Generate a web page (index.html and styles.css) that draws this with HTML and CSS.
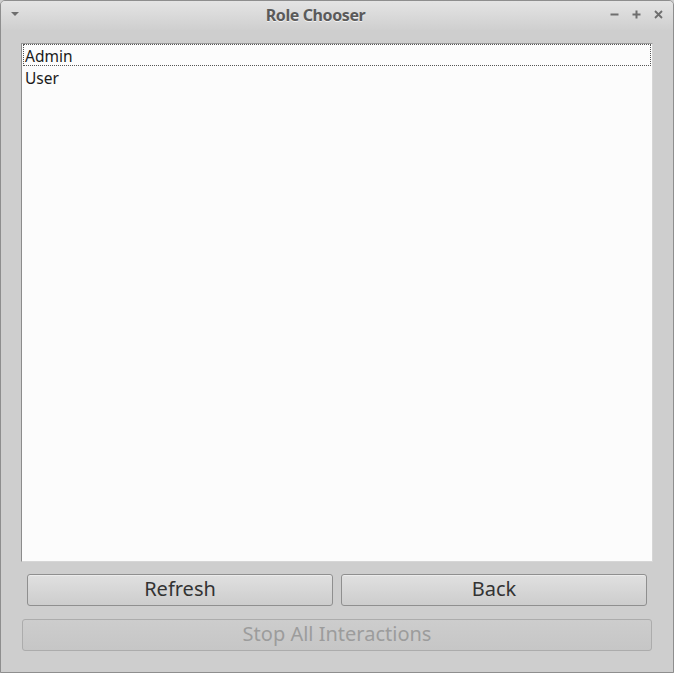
FILE: index.html
```html
<!DOCTYPE html>
<html>
<head>
<meta charset="utf-8">
<link rel="stylesheet" href="styles.css">
</head>
<body>
<div class="window">
  <div class="titlebar">
    <svg class="menu-arrow" width="8" height="5" viewBox="0 0 8 5"><path d="M0 0 L8 0 L4 4 Z" fill="#6e6e6e"/></svg>
    <div class="title">Role Chooser</div>
    <div class="controls">
      <svg width="9" height="9" viewBox="0 0 9 9"><path d="M0.5 4.5 H8.5" stroke="#6e6e6e" stroke-width="2"/></svg>
      <svg width="9" height="9" viewBox="0 0 9 9"><path d="M0.5 4.5 H8.5 M4.5 0.5 V8.5" stroke="#6e6e6e" stroke-width="2"/></svg>
      <svg width="9" height="9" viewBox="0 0 9 9"><path d="M1 1 L8 8 M8 1 L1 8" stroke="#6e6e6e" stroke-width="1.8"/></svg>
    </div>
  </div>
  <div class="content">
    <div class="list">
      <div class="item focused">Admin</div>
      <div class="item">User</div>
    </div>
    <div class="button-row">
      <button class="btn">Refresh</button>
      <button class="btn">Back</button>
    </div>
    <button class="btn btn-wide" disabled>Stop All Interactions</button>
  </div>
</div>
</body>
</html>
```

FILE: styles.css
```css
html, body {
  margin: 0;
  padding: 0;
  background: #cecece;
}
body {
  font-family: "Noto Sans", "Open Sans", sans-serif;
}
.window {
  width: 674px;
  height: 673px;
  box-sizing: border-box;
  border: 1px solid #8e8e8e;
  border-radius: 5px 5px 0 0;
  background: #cecece;
  display: flex;
  flex-direction: column;
  overflow: hidden;
}
.titlebar {
  height: 29px;
  flex: none;
  background: linear-gradient(#e4e4e4, #cfcfcf);
  display: flex;
  align-items: center;
  position: relative;
}
.menu-arrow {
  margin-left: 10px;
  margin-top: -3px;
}
.title {
  position: absolute;
  left: 0;
  right: 0;
  top: 3px;
  text-align: center;
  font-family: "Noto Sans", sans-serif;
  font-weight: bold;
  font-size: 16px;
  letter-spacing: -0.4px;
  color: #5a5a5a;
  text-shadow: 0 1px 0 #f2f2f2;
  margin-left: -43px;
}
.controls {
  margin-left: auto;
  margin-right: 10px;
  margin-top: -3px;
  display: flex;
  gap: 13px;
}
.controls svg {
  display: block;
}
.content {
  flex: 1;
  padding: 13px 20px 0 20px;
  display: flex;
  flex-direction: column;
}
.list {
  height: 519px;
  box-sizing: border-box;
  background: #fcfcfc;
  border-left: 1px solid #8c8c8c;
  border-top: 1px solid #9a9a9a;
  border-right: 1px solid #d6d6d6;
  border-bottom: 1px solid #d6d6d6;
  padding: 0 1px;
}
.item {
  height: 22px;
  line-height: 24px;
  font-size: 15.5px;
  color: #1a1a1a;
  padding-left: 2px;
  box-sizing: border-box;
}
.item.focused {
  outline: 1px dotted #555;
  outline-offset: -1px;
  padding-left: 2px;
}
.button-row {
  display: grid;
  grid-template-columns: 1fr 1fr;
  gap: 8px;
  margin: 12px 6px 0 6px;
}
.btn {
  font-family: "Noto Sans", "Open Sans", sans-serif;
  font-size: 20px;
  color: #333;
  height: 32px;
  box-sizing: border-box;
  border: 1px solid #8f8f8f;
  border-radius: 3px;
  background: linear-gradient(#e0e0e0, #cdcdcd);
  padding: 0 0 3px 0;
  line-height: 27px;
  box-shadow: inset 0 1px 0 #ececec;
}
.btn-wide {
  margin: 13px 1px 0 1px;
  color: #9c9c9c;
  border-color: #acacac;
  background: linear-gradient(#cdcdcd, #c6c6c6);
  box-shadow: none;
}
```
